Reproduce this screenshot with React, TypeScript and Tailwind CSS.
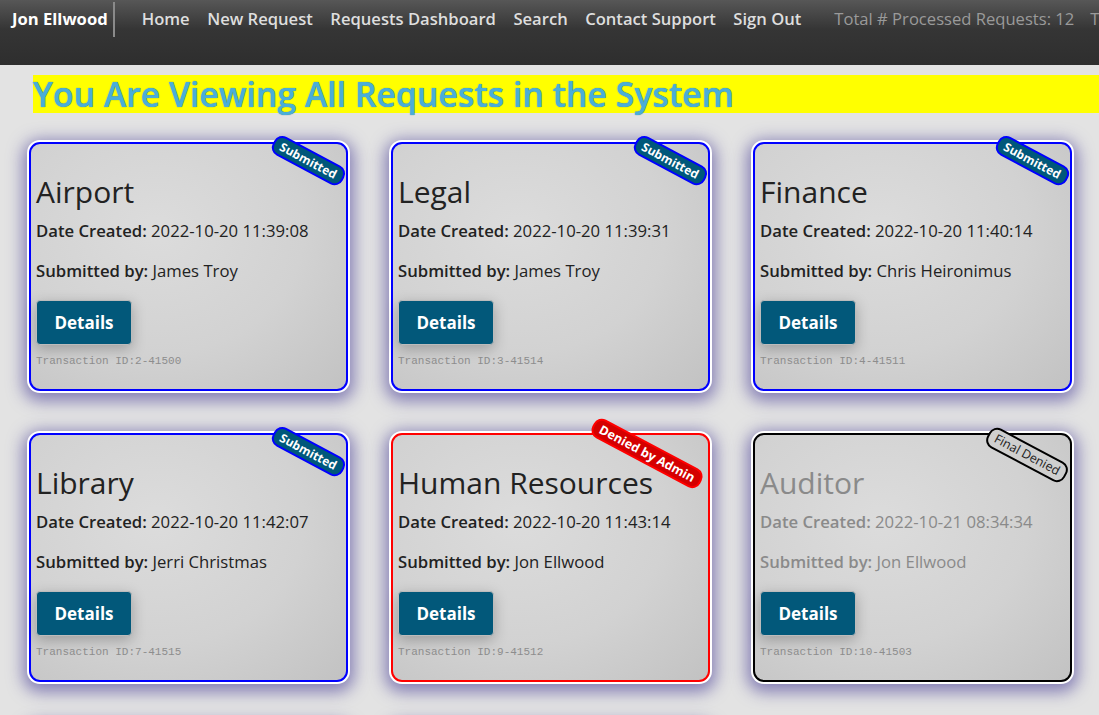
const requests = [
    { title: 'Airport', created: '2022-10-20 11:39:08', by: 'James Troy', tx: '2-41500', status: 'submitted' },
    { title: 'Legal', created: '2022-10-20 11:39:31', by: 'James Troy', tx: '3-41514', status: 'submitted' },
    { title: 'Finance', created: '2022-10-20 11:40:14', by: 'Chris Heironimus', tx: '4-41511', status: 'submitted' },
    { title: 'Library', created: '2022-10-20 11:42:07', by: 'Jerri Christmas', tx: '7-41515', status: 'submitted' },
    { title: 'Human Resources', created: '2022-10-20 11:43:14', by: 'Jon Ellwood', tx: '9-41512', status: 'denied' },
    { title: 'Auditor', created: '2022-10-21 08:34:34', by: 'Jon Ellwood', tx: '10-41503', status: 'final' },
    { title: 'Parking', created: '2022-10-21 09:02:11', by: 'James Troy', tx: '11-41520', status: 'submitted' },
    { title: 'Facilities', created: '2022-10-21 09:15:40', by: 'Jerri Christmas', tx: '12-41522', status: 'submitted' },
]

const navLinks = ['Home', 'New Request', 'Requests Dashboard', 'Search', 'Contact Support', 'Sign Out']

function Badge({ status }: { status: string }) {
    if (status === 'denied') return (
        <span className="absolute right-[4px] top-[12px] rotate-[28deg] rounded-[9px] border-2 border-[#ff0000] bg-[#d40000] px-[6px] text-[12.5px] font-bold leading-[17px] text-white whitespace-nowrap">
            Denied by Admin
        </span>
    )
    if (status === 'final') return (
        <span className="absolute right-[3px] top-[13px] rotate-[28deg] rounded-[9px] border-2 border-black bg-[#cfcfcf] px-[6px] text-[12.5px] leading-[18px] text-[#222] whitespace-nowrap">
            Final Denied
        </span>
    )
    return (
        <span className="absolute right-[2px] top-[10px] rotate-[28deg] rounded-[9px] border-2 border-[#0000ff] bg-[#00587a] px-[6px] text-[12px] font-bold leading-[17px] text-white whitespace-nowrap">
            Submitted
        </span>
    )
}

function RequestCard({ r }: { r: typeof requests[number] }) {
    const border = r.status === 'denied' ? 'border-[#ff0000]' : r.status === 'final' ? 'border-black' : 'border-[#0000ff]'
    const text = r.status === 'final' ? 'text-[#8a8a8a]' : 'text-[#222]'
    return (
        <div className="relative rounded-[13px] bg-white p-[2px] shadow-[0_4px_16px_4px_rgba(70,60,150,0.6)]">
            <div className={`h-[249px] rounded-[11px] border-2 ${border} bg-[radial-gradient(ellipse_at_40%_35%,#dcdcdc_0%,#d2d2d2_55%,#c2c2c2_100%)] px-[5px] pt-[31px]`}>
                <h2 className={`text-[30px] leading-[34px] ${text}`}>{r.title}</h2>
                <p className={`mt-[11px] text-[16.7px] leading-[22px] ${text}`}>
                    <span className="font-semibold">Date Created:</span> {r.created}
                </p>
                <p className={`mt-[18px] text-[16.7px] leading-[22px] ${text}`}>
                    <span className="font-semibold">Submitted by:</span> {r.by}
                </p>
                <button className="mt-[18px] h-[45px] w-[96px] rounded-[4px] border border-[#bcbcbc] bg-[#02587a] text-[17px] font-bold text-white shadow-[0_4px_14px_rgba(0,0,0,0.25)]">
                    Details
                </button>
                <p className="mt-[9px] font-['Liberation_Mono',monospace] text-[11px] leading-[14px] text-[#8d8d8d]">
                    Transaction ID:{r.tx}
                </p>
            </div>
            <Badge status={r.status} />
        </div>
    )
}

export default function App() {
    return (
        <div className="min-h-[715px] overflow-hidden bg-[#e3e3e3] font-['Open_Sans',sans-serif]">
            {/* Navbar */}
            <nav className="flex h-[65px] items-start bg-[linear-gradient(#575757,#353535_45%,#2e2e2e)] pt-[2px] text-[16.6px] font-semibold whitespace-nowrap">
                <div className="flex h-[35px] items-center border-r-2 border-[#8a8a8a] pl-[12px] pr-[5px] font-bold text-white">
                    Jon Ellwood
                </div>
                <div className="ml-[27px] flex h-[35px] items-center gap-[17.5px] text-[#dedede]">
                    {navLinks.map(l => (
                        <a key={l} href="#">{l}</a>
                    ))}
                </div>
                <div className="ml-[33px] flex h-[35px] items-center gap-[16px] font-normal text-[#9a9a9a]">
                    <span>Total # Processed Requests: 12</span>
                    <span>Total # Requests: 12</span>
                </div>
            </nav>

            {/* Heading */}
            <div className="ml-[33px] mt-[10px] bg-[#ffff00]">
                <h1 className="text-[33.8px] font-semibold leading-[38px] text-[#4aaed8] [text-shadow:0_0_1px_#1f6f8f]">
                    You Are Viewing All Requests in the System
                </h1>
            </div>

            {/* Cards */}
            <div className="mt-[27px] grid grid-cols-[323px_323px_323px] gap-x-[39px] gap-y-[38px] pl-[27px]">
                {requests.map(r => (
                    <RequestCard key={r.tx} r={r} />
                ))}
            </div>
        </div>
    )
}
